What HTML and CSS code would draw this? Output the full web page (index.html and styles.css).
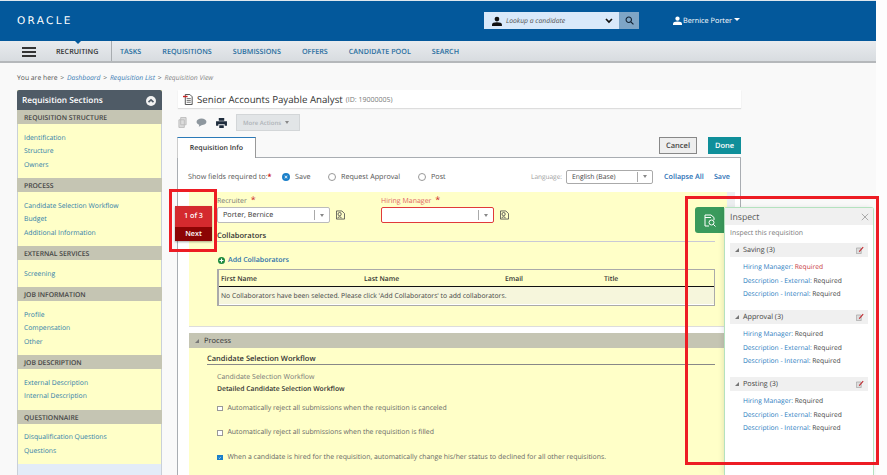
FILE: index.html
```html
<!DOCTYPE html>
<html lang="en">
<head>
<meta charset="utf-8">
<title>Requisition View</title>
<link rel="stylesheet" href="styles.css">
</head>
<body>
<div class="page">
  <header class="top">
    <div class="logo">ORACLE</div>
    <div class="lookup">
      <svg class="ic-person" viewBox="0 0 10 10"><circle cx="5" cy="3" r="2.4"/><path d="M0 10V8.600C0 7 2 6.200 5 6.200s5 .8 5 2.400V10z"/></svg>
      <span class="lookup-text">Lookup a candidate</span>
      <svg class="ic-chev" viewBox="0 0 8 6"><path d="M1 1l3 3 3-3" fill="none" stroke="#111" stroke-width="1.700"/></svg>
      <span class="lookup-btn"><svg viewBox="0 0 10 10"><circle cx="4.200" cy="4.200" r="3" fill="none" stroke="#123" stroke-width="1.200"/><path d="M6.500 6.500L9.400 9.400" stroke="#123" stroke-width="1.300"/></svg></span>
    </div>
    <div class="user">
      <svg class="ic-user" viewBox="0 0 10 10"><circle cx="5" cy="3" r="2.400"/><path d="M0 10V8.600C0 7 2 6.200 5 6.200s5 .8 5 2.400V10z"/></svg>
      <span>Bernice Porter</span><i class="caret"></i>
    </div>
  </header>
  <nav class="nav">
    <div class="burger"><i></i><i></i><i></i></div>
    <div class="nav-home">RECRUITING</div>
    <a>TASKS</a><a>REQUISITIONS</a><a>SUBMISSIONS</a><a>OFFERS</a><a>CANDIDATE POOL</a><a>SEARCH</a>
  </nav>
  <div class="crumbs"><span>You are here</span><span>&gt;</span><a>Dashboard</a><span>&gt;</span><a>Requisition List</a><span>&gt;</span><em>Requisition View</em></div>

  <div class="main">
    <aside class="side">
      <div class="side-head"><span>Requisition Sections</span><i class="collapse"><svg viewBox="0 0 10 10"><path d="M2.500 6.200L5 3.800l2.500 2.400" fill="none" stroke="#4f5b66" stroke-width="1.600"/></svg></i></div>
      <h4>REQUISITION STRUCTURE</h4>
      <ul class="s1"><li>Identification</li><li>Structure</li><li>Owners</li></ul>
      <h4>PROCESS</h4>
      <ul class="s1"><li>Candidate Selection Workflow</li><li>Budget</li><li>Additional Information</li></ul>
      <h4>EXTERNAL SERVICES</h4>
      <ul class="s1"><li>Screening</li></ul>
      <h4>JOB INFORMATION</h4>
      <ul class="s1"><li>Profile</li><li>Compensation</li><li>Other</li></ul>
      <h4>JOB DESCRIPTION</h4>
      <ul class="s1"><li>External Description</li><li>Internal Description</li></ul>
      <h4>QUESTIONNAIRE</h4>
      <ul class="s1"><li>Disqualification Questions</li><li>Questions</li></ul>
      <div class="side-end"></div>
    </aside>

    <section class="content">
      <div class="title">
        <svg class="ic-doc" viewBox="0 0 12 12"><path d="M2.500 .5h5l2.500 2.500v8.500h-7.500z" fill="#fff" stroke="#444"/><path d="M4 5h4.500M4 7h4.500M4 9h4.500" stroke="#444" stroke-width=".8"/><path d="M0 2h5v1.500H0z" fill="#c22"/></svg>
        <span class="title-text">Senior Accounts Payable Analyst</span><span class="title-id">(ID: 19000005)</span>
      </div>
      <div class="tools">
        <svg class="t1" viewBox="0 0 10 12"><path d="M3 .5h6v8H3z M1 3h6v8.500H1z" fill="#ddd" stroke="#bbb"/></svg>
        <svg class="t2" viewBox="0 0 12 10"><path d="M6 .5c3 0 5.500 1.500 5.500 3.800S9 8 6 8L3 9.800 3.500 7.600C1.500 7 .5 5.800.5 4.300.5 2 3 .5 6 .5z" fill="#8e979e"/></svg>
        <svg class="t3" viewBox="0 0 12 11"><path d="M3 0h6v3H3zM0 3.500h12v5h-2.500V7h-7v1.500H0zM3.500 8h5v3h-5z" fill="#1f2d3d"/></svg>
        <span class="more">More Actions<i class="caret-g"></i></span>
      </div>
      <div class="tabrow">
        <div class="tab">Requisition Info</div>
        <div class="acts"><span class="cancel">Cancel</span><span class="done">Done</span></div>
      </div>
      <div class="panel">
        <div class="req-row">
          <span class="req-label">Show fields required to:<b>*</b></span>
          <span class="opt"><span class="radio on"></span>Save</span>
          <span class="opt o2"><span class="radio"></span>Request Approval</span>
          <span class="opt o3"><span class="radio"></span>Post</span>
          <span class="lang">Language:</span>
          <span class="lang-sel">English (Base)<i class="sep"></i><i class="caret-g"></i></span>
          <a class="link-b">Collapse All</a><a class="link-b">Save</a>
        </div>
        <div class="area">
          <div class="yellow first">
            <div class="fields">
              <div class="field">
                <label>Recruiter <b>*</b></label>
                <div class="sel-row"><span class="sel">Porter, Bernice<i class="sep"></i><i class="caret-g"></i></span><svg class="lookup-ic" viewBox="0 0 10 10"><path d="M.5.5h6l3 3v6h-9z" fill="none" stroke="#444" stroke-width=".9"/><circle cx="4" cy="4" r="1.800" fill="none" stroke="#444" stroke-width=".9"/><path d="M2 8.500c0-2 4-2 4 0" fill="none" stroke="#444" stroke-width=".9"/></svg></div>
              </div>
              <div class="field">
                <label class="err">Hiring Manager <b>*</b></label>
                <div class="sel-row"><span class="sel bad"><i class="sep"></i><i class="caret-g"></i></span><svg class="lookup-ic" viewBox="0 0 10 10"><path d="M.5.5h6l3 3v6h-9z" fill="none" stroke="#444" stroke-width=".9"/><circle cx="4" cy="4" r="1.800" fill="none" stroke="#444" stroke-width=".9"/><path d="M2 8.500c0-2 4-2 4 0" fill="none" stroke="#444" stroke-width=".9"/></svg></div>
              </div>
            </div>
            <div class="collab">Collaborators</div>
            <a class="add"><svg viewBox="0 0 10 10"><circle cx="5" cy="5" r="5" fill="#1b8a3d"/><path d="M5 2.200v5.600M2.200 5h5.600" stroke="#fff" stroke-width="1.600"/></svg>Add Collaborators</a>
            <div class="tbl">
              <div class="tbl-head"><span>First Name</span><span>Last Name</span><span>Email</span><span>Title</span></div>
              <div class="tbl-row">No Collaborators have been selected. Please click 'Add Collaborators' to add collaborators.</div>
            </div>
          </div>
          <div class="proc-head"><i class="tri"></i>Process</div>
          <div class="yellow second">
            <div class="sub">Candidate Selection Workflow</div>
            <div class="csw">Candidate Selection Workflow</div>
            <div class="csw-b">Detailed Candidate Selection Workflow</div>
            <div class="chk"><i class="box"></i>Automatically reject all submissions when the requisition is canceled</div>
            <div class="chk"><i class="box"></i>Automatically reject all submissions when the requisition is filled</div>
            <div class="chk"><i class="box on"><svg viewBox="0 0 8 8"><path d="M1.500 4l2 2 3-4" fill="none" stroke="#fff" stroke-width="1.200"/></svg></i>When a candidate is hired for the requisition, automatically change his/her status to declined for all other requisitions.</div>
          </div>
        </div>
      </div>
    </section>
  </div>

  <div class="tour"><div class="tour-a">1 of 3</div><div class="tour-b">Next</div></div>

  <div class="insp-tab"><svg viewBox="0 0 12 13"><path d="M1 12V1h6l3 2.500V6" fill="none" stroke="#fff" stroke-width="1"/><path d="M1 3.500h6" stroke="#fff" stroke-width="1"/><circle cx="7.500" cy="8.500" r="2.500" fill="none" stroke="#fff" stroke-width="1"/><path d="M9.300 10.300l2.200 2.200M1 12h4" stroke="#fff" stroke-width="1"/></svg></div>
  <aside class="inspect">
    <div class="insp-head"><span>Inspect</span><svg viewBox="0 0 10 10"><path d="M1 1l8 8M9 1l-8 8" stroke="#999" stroke-width="1"/></svg></div>
    <div class="insp-sub">Inspect this requisition</div>
    <div class="grp"><i class="tri"></i><span>Saving (3)</span><svg viewBox="0 0 10 10"><path d="M.5 2.500h6v7h-6z" fill="#ddd" stroke="#aaa"/><path d="M3.500 6.500L8.500.8l1 1L4.500 7.500z" fill="#c1272d"/></svg></div>
    <ul class="items"><li><a>Hiring Manager:</a> <em>Required</em></li><li><a>Description - External:</a> Required</li><li><a>Description - Internal:</a> Required</li></ul>
    <div class="grp"><i class="tri"></i><span>Approval (3)</span><svg viewBox="0 0 10 10"><path d="M.5 2.500h6v7h-6z" fill="#ddd" stroke="#aaa"/><path d="M3.500 6.500L8.500.8l1 1L4.500 7.500z" fill="#c1272d"/></svg></div>
    <ul class="items"><li><a>Hiring Manager:</a> Required</li><li><a>Description - External:</a> Required</li><li><a>Description - Internal:</a> Required</li></ul>
    <div class="grp"><i class="tri"></i><span>Posting (3)</span><svg viewBox="0 0 10 10"><path d="M.5 2.500h6v7h-6z" fill="#ddd" stroke="#aaa"/><path d="M3.500 6.500L8.500.8l1 1L4.500 7.500z" fill="#c1272d"/></svg></div>
    <ul class="items"><li><a>Hiring Manager:</a> Required</li><li><a>Description - External:</a> Required</li><li><a>Description - Internal:</a> Required</li></ul>
  </aside>
</div>
<div class="mark m1"></div>
<div class="mark m2"></div>
</body>
</html>
```
FILE: styles.css
```css
* { box-sizing: border-box; }
html, body { margin: 0; padding: 0; height: 475px; overflow: hidden; background: #fdfdfd; }
body { position: relative; font-family: "Open Sans", "Noto Sans", sans-serif; font-size: 7px; color: #444; text-rendering: geometricPrecision; white-space: nowrap; }
a { color: #2a6fa8; }
i { font-style: normal; display: block; }
ul { list-style: none; margin: 0; padding: 0; }

.page { width: 876px; height: 475px; background: #f9f9f9; overflow: hidden; display: flex; flex-direction: column; }

.top { height: 41px; flex: none; background: #03589b; border-top: 1px solid #dfe7ee; display: flex; align-items: center; padding: 0 0 1px 17px; color: #fff; }
.logo { width: 467px; font-family: "DejaVu Sans", sans-serif; font-size: 10.500px; letter-spacing: 2.300px; line-height: 10px; color: #fff; }
.lookup { width: 155px; height: 17px; background: #d9e9fa; display: flex; align-items: center; padding-left: 8px; }
.ic-person { width: 10px; height: 10px; fill: #111; }
.lookup-text { width: 100px; margin-left: 4px; font-style: italic; color: #555; font-size: 6.800px; }
.ic-chev { width: 8px; height: 6px; }
.lookup-btn { width: 20px; height: 17px; margin-left: 6px; background: #7ea5c6; display: flex; align-items: center; justify-content: center; }
.lookup-btn svg { width: 9px; height: 9px; }
.user { margin-left: 34px; display: flex; align-items: center; font-size: 7.300px; color: #fff; }
.ic-user { width: 9px; height: 9px; fill: #fff; margin-right: 1px; }
.caret { width: 0; height: 0; margin: -2px 0 0 2px; border: 3px solid transparent; border-top-color: #fff; border-bottom: 0; }

.nav { height: 22px; flex: none; display: flex; align-items: center; gap: 21px; padding: 1px 0 0 22px; background: linear-gradient(#e8ebee, #d8dce0); border-bottom: 2px solid #b5b8bb; font-weight: 600; font-size: 7.200px; }
.nav a { color: #2a6fa0; }
.burger { width: 14px; display: flex; flex-direction: column; gap: 2px; }
.burger i { height: 2px; background: #333; }
.nav-home { width: 56px; margin: -1px -13px 0 -1px; color: #333; position: relative; align-self: stretch; line-height: 22px; }
.nav-home::before { content: ""; position: absolute; top: 0; left: 19px; border: 3px solid transparent; border-top-color: #03589b; border-bottom: 0; }
.nav-home::after { content: ""; position: absolute; top: 0; bottom: 0; right: 0; width: 1px; background: #a8acb0; }
.crumbs { height: 27px; flex: none; padding: 8.500px 0 0 17px; display: flex; gap: 2.800px; line-height: 12px; font-size: 6.800px; color: #555; }
.crumbs a { color: #3b7db5; font-style: italic; }
.crumbs em { color: #888; }

.main { flex: 1; min-height: 0; display: flex; align-items: flex-start; padding-left: 17px; }
.side { width: 145px; height: 385px; flex: none; background: #ffffc8; overflow: hidden; display: flex; flex-direction: column; }
.side-head { height: 20px; flex: none; background: #4f5b66; color: #fff; font-size: 8.300px; font-weight: 600; padding: 1px 6px 0 5px; display: flex; align-items: center; justify-content: space-between; border-radius: 2px 2px 0 0; }
.collapse { width: 10px; height: 10px; border-radius: 50%; background: #f2f2f2; }
.collapse svg { display: block; }
.side h4 { margin: 0; height: 14px; line-height: 15px; flex: none; background: #c5c5b3; color: #444; font-size: 6.800px; font-weight: 600; padding-left: 7px; }
.s1 { padding: 6.500px 0 7px 6px; border-left: 1px solid #c9d0d8; border-right: 1px solid #c9d0d8; }
.s1 li { height: 13.500px; line-height: 13.500px; color: #2f7ea8; font-size: 6.800px; }
.side-end { flex: 1; background: #e3ecf8; border-left: 1px solid #c9d0d8; border-right: 1px solid #c9d0d8; }

.content { width: 564px; margin-left: 15px; display: flex; flex-direction: column; }
.title { height: 18px; flex: none; margin-left: 1px; background: #fff; box-shadow: 0 1px 1px #ddd; display: flex; align-items: center; padding-left: 5px; }
.ic-doc { width: 11px; height: 11px; margin-right: 3px; }
.title-text { font-size: 9.700px; color: #333; font-weight: 500; }
.title-id { font-size: 7px; color: #777; margin-left: 3px; margin-top: 2px; }
.tools { height: 29px; flex: none; display: flex; align-items: center; }
.tools svg { flex: none; }
.t1 { width: 9px; height: 11px; margin-left: 1px; }
.t2 { width: 11px; height: 9px; margin-left: 9px; }
.t3 { width: 11px; height: 10px; margin-left: 9px; }
.more { width: 64px; height: 17px; margin-left: 9px; background: #e2e5e7; border: 1px solid #d3d6d8; color: #aeb3b7; font-size: 6px; font-weight: 600; display: flex; align-items: center; padding-left: 6px; }
.more .caret-g { margin-left: 4px; }
.caret-g { width: 0; height: 0; border: 2.500px solid transparent; border-top: 3px solid #888; border-bottom: 0; flex: none; }

.tabrow { height: 20px; flex: none; display: flex; justify-content: space-between; align-items: flex-start; position: relative; z-index: 1; }
.tab { width: 79px; height: 21px; background: #fff; border-top: 1px solid #2b7ab8; border-right: 1px solid #999; border-left: 1px solid #ccc; text-align: center; line-height: 22px; font-size: 7px; font-weight: 600; color: #333; }
.acts { display: flex; gap: 11px; }
.cancel { width: 38px; height: 17px; background: #eee; border: 1px solid #888; color: #444; font-size: 7.500px; font-weight: 600; text-align: center; line-height: 16px; }
.done { width: 33px; height: 17px; background: #0f8f9a; color: #fff; font-size: 7.500px; font-weight: 600; text-align: center; line-height: 18px; }

.panel { height: 320px; background: #fff; border: 1px solid #a9adb2; border-bottom: 0; }
.req-row { height: 34px; display: flex; align-items: center; padding: 3px 0 0 10px; color: #555; font-size: 7.200px; }
.req-label { width: 94px; }
.req-label b { color: #c22; }
.opt { display: flex; align-items: center; width: 46px; }
.o2 { width: 90px; }
.o3 { width: 30px; }
.radio { width: 8px; height: 8px; border-radius: 50%; border: 1px solid #999; background: #fff; flex: none; margin-right: 5px; }
.radio.on { border: 2px solid #1a7fc9; box-shadow: inset 0 0 0 1px #1a7fc9; }
.lang { margin-left: 83px; width: 35px; color: #999; font-size: 6.500px; }
.lang-sel { width: 87px; height: 14px; margin-right: 1px; background: #fff; border: 1px solid #aaa; border-radius: 2px; color: #444; font-size: 6.800px; display: flex; align-items: center; padding-left: 5px; }
.sep { width: 1px; height: 10px; background: #aaa; margin-left: auto; margin-right: 5px; flex: none; }
.lang-sel .caret-g, .sel .caret-g { margin-right: 5px; }
.link-b { color: #2a6fb5; font-weight: 600; font-size: 7.200px; margin-left: 10px; }

.area { margin-left: 11px; width: 546px; background: #fff; }
.yellow { background: #ffffc8; }
.first { height: 135px; border-right: 8px solid #eceef0; padding: 3px 12px 0 28px; border-bottom: 1px solid #ddd; }
.fields { display: flex; gap: 50px; }
.field { width: 114px; }
.field label { display: block; height: 12px; line-height: 9px; color: #777; font-size: 7px; }
.field label b { color: #c22; font-size: 9px; font-weight: 400; margin-left: 2px; }
.field label.err { color: #e06666; }
.sel-row { display: flex; align-items: center; width: 130px; }
.sel { width: 113px; height: 16px; flex: none; background: #fff; border: 1px solid #bbb; border-radius: 2px; padding-left: 5px; font-size: 7.200px; color: #333; display: flex; align-items: center; }
.sel.bad { border-color: #e03a3a; }
.lookup-ic { width: 9px; height: 10px; margin-left: 6px; flex: none; }
.collab { height: 13px; margin-top: 6px; border-bottom: 1px solid #c9c9d6; font-size: 7.500px; font-weight: 600; line-height: 14px; color: #333; }
.add { display: flex; align-items: center; margin-top: 13px; height: 10px; padding: 1px 0 0 1px; color: #2a6fa8; font-weight: 600; font-size: 7px; }
.add svg { width: 7px; height: 7px; margin-right: 3px; }
.tbl { margin-top: 4px; border: 1px solid #aaa; border-left-width: 2px; }
.tbl-head { height: 17px; display: grid; grid-template-columns: 143px 141px 99px 1fr; align-items: center; padding-left: 2px; border-bottom: 1px solid #111; font-size: 6.800px; font-weight: 600; color: #333; }
.tbl-row { height: 18px; line-height: 17px; padding-left: 2px; background: #f6f6dc; font-size: 6.800px; color: #444; border-bottom: 1px solid #fff; }
.proc-head { height: 15px; margin-top: 6px; background: #c5c5b3; display: flex; align-items: center; font-size: 7.500px; font-weight: 500; color: #333; padding-left: 6px; }
.tri { width: 0; height: 0; border-bottom: 4px solid #777; border-left: 4px solid transparent; margin-right: 5px; flex: none; }
.second { height: 140px; padding: 6px 20px 0 18px; }
.sub { height: 10px; line-height: 10px; font-size: 7.500px; font-weight: 600; color: #333; }
.csw { padding: 8px 0 0 10px; border-top: 1px solid #888; line-height: 10px; color: #777; font-size: 7px; }
.csw-b { padding-left: 10px; line-height: 11px; font-weight: 600; font-size: 6.800px; color: #333; }
.chk { display: flex; align-items: center; height: 24.500px; padding-left: 10px; font-size: 6.900px; color: #666; }
.csw-b + .chk { margin-top: 2px; }
.box { width: 5.500px; height: 5.500px; border: 1px solid #999; background: #fff; margin-right: 5px; flex: none; }
.box.on { background: #1a7fc9; border-color: #1a7fc9; }
.box svg { display: block; width: 100%; height: 100%; }

.tour { position: absolute; left: 175px; top: 206px; width: 37px; box-shadow: 0 1px 2px rgba(0,0,0,.35); color: #fff; font-weight: 600; font-size: 7.200px; text-align: center; }
.tour-a { height: 21px; line-height: 21px; background: #d42a2e; }
.tour-b { height: 14px; line-height: 14px; background: #8c0404; }

.insp-tab { position: absolute; left: 695px; top: 207px; width: 29px; height: 26px; background: #3a9a5c; border-radius: 3px 0 0 3px; display: flex; align-items: center; justify-content: center; }
.insp-tab svg { width: 12px; height: 13px; }
.inspect { position: absolute; left: 724px; top: 207px; width: 150px; height: 268px; background: #fff; border: 1px solid #b4e2bf; border-bottom: 0; border-radius: 3px 3px 0 0; box-shadow: -2px 0 4px rgba(0,0,0,.08); }
.insp-head { height: 17px; background: #f0f0f0; display: flex; align-items: center; justify-content: space-between; padding: 0 4px 0 5px; font-size: 8.700px; font-weight: 500; color: #555; }
.insp-head svg { width: 8px; height: 8px; }
.insp-sub { height: 18px; line-height: 17px; padding-left: 5px; color: #777; font-size: 6.900px; }
.grp { height: 14px; margin: 0 5px; background: #f0f0f0; display: flex; align-items: center; padding-left: 5px; font-size: 7.200px; font-weight: 500; color: #444; }
.grp .tri { margin-right: 4px; }
.grp svg { width: 8px; height: 8px; margin-left: auto; margin-right: 4px; }
.items { padding: 3px 0 8px 18px; height: 53px; font-size: 6.700px; color: #444; }
.items li { height: 13.500px; line-height: 13.500px; }
.items a { color: #2a7cc0; }
.items em { font-style: normal; color: #c8383c; }

.mark { position: absolute; border: 3px solid #ed1c24; pointer-events: none; }
.m1 { left: 169px; top: 189px; width: 48px; height: 63px; }
.m2 { left: 685px; top: 196px; width: 194px; height: 269px; }
```
